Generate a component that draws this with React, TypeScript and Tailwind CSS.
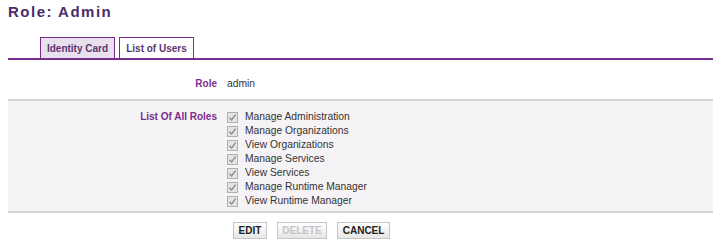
import React from "react";

const roles = [
  "Manage Administration",
  "Manage Organizations",
  "View Organizations",
  "Manage Services",
  "View Services",
  "Manage Runtime Manager",
  "View Runtime Manager",
];

function CheckBox() {
  return (
    <span className="flex h-[11px] w-[11px] shrink-0 items-center justify-center border border-[#b0b0b0] bg-[#e4e4e4]">
      <svg width="9" height="9" viewBox="0 0 9 9">
        <path d="M1.5 4.8 L3.6 7 L7.6 1.6" fill="none" stroke="#8a8a8a" strokeWidth="1.3" />
      </svg>
    </span>
  );
}

function Btn({ label, disabled }: { label: string; disabled?: boolean }) {
  return (
    <button
      className={
        "h-[17px] border border-[#c6c6c6] bg-gradient-to-b from-white to-[#e6e6e6] px-[4.5px] text-[10px] font-bold leading-none " +
        (disabled ? "text-[#c4c4c4]" : "text-[#222]")
      }
    >
      {label}
    </button>
  );
}

export default function App() {
  return (
    <div className="h-[244px] w-[713px] bg-white font-['Liberation_Sans',Arial,sans-serif]">
      <h1 className="pl-[8px] pt-[2px] text-[15px] font-bold leading-[19px] tracking-[1.5px] text-[#4b2a6b]">
        Role: Admin
      </h1>

      {/* tabs */}
      <div className="ml-[8px] mt-[16px] flex gap-[4px] border-b-2 border-[#7b2d8e] pl-[32px]">
        <div className="flex h-[21px] w-[75px] items-center justify-center border border-b-0 border-[#7b2d8e] bg-[#e8e0ec] text-[10px] font-bold text-[#5b3570]">
          Identity Card
        </div>
        <div className="flex h-[21px] w-[75px] items-center justify-center border border-b-0 border-[#7b2d8e] bg-white text-[10px] font-bold text-[#5b3570]">
          List of Users
        </div>
      </div>

      <div className="ml-[8px]">
        <div className="flex h-[41px] border-b-2 border-[#d6d6d6] pt-[17px]">
          <div className="w-[209px] text-right text-[10px] font-bold leading-[14px] text-[#7b2d8e]">Role</div>
          <div className="pl-[10px] text-[10.3px] leading-[14px] text-[#333]">admin</div>
        </div>
        <div className="flex h-[112px] border-b-2 border-[#d6d6d6] bg-[#f5f3f5] pt-[9px]">
          <div className="w-[209px] text-right text-[10px] font-bold leading-[14px] text-[#7b2d8e]">
            List Of All Roles
          </div>
          <div className="flex flex-col pl-[10px]">
            {roles.map((r) => (
              <div key={r} className="flex h-[14px] items-center gap-[7px]">
                <CheckBox />
                <span className="text-[10.3px] text-[#333]">{r}</span>
              </div>
            ))}
          </div>
        </div>
      </div>

      <div className="mt-[9px] flex gap-[10px] pl-[233px]">
        <Btn label="EDIT" />
        <Btn label="DELETE" disabled />
        <Btn label="CANCEL" />
      </div>
    </div>
  );
}
